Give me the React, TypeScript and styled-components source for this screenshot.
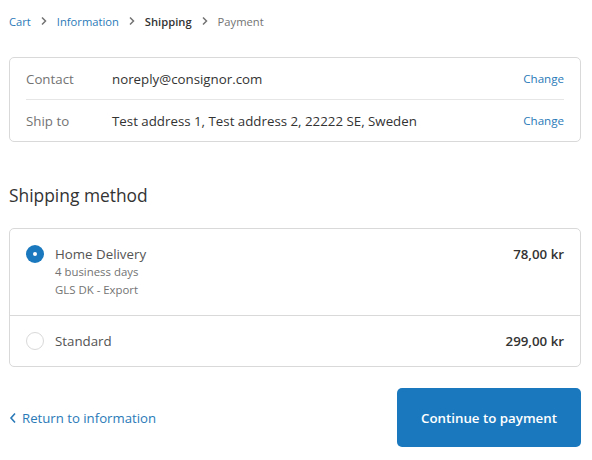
import React from 'react';
import styled, { createGlobalStyle } from 'styled-components';

const GlobalStyle = createGlobalStyle`
  html, body {
    margin: 0;
    padding: 0;
    background: #fff;
  }
  body {
    font-family: "Open Sans", "Noto Sans", sans-serif;
    color: #333;
  }
`;

const Page = styled.div`
  width: 592px;
  box-sizing: border-box;
  padding: 12px 12px 0 9px;
`;

const Breadcrumbs = styled.nav`
  display: flex;
  align-items: center;
  gap: 8px;
  height: 18px;
  font-size: 11.2px;
`;

const Crumb = styled.span<{ $state: 'link' | 'current' | 'next' }>`
  color: ${({ $state }) =>
    $state === 'link' ? '#2a7ab8' : $state === 'current' ? '#333' : '#737373'};
  font-weight: ${({ $state }) => ($state === 'current' ? 600 : 400)};
`;

const Chevron = styled.svg`
  width: 10px;
  height: 10px;
  color: #737373;
`;

const Box = styled.div`
  border: 1px solid #d9d9d9;
  border-radius: 5px;
  box-sizing: border-box;
  width: 572px;
`;

const SummaryBox = styled(Box)`
  margin-top: 27px;
  padding: 0 16px;
`;

const SummaryRow = styled.div`
  display: flex;
  align-items: center;
  height: 41px;
  font-size: 13.3px;

  & + & {
    border-top: 1px solid #e6e6e6;
  }
`;

const SummaryLabel = styled.span`
  width: 86px;
  color: #737373;
`;

const SummaryValue = styled.span`
  flex: 1;
  color: #333;
`;

const ChangeLink = styled.a`
  font-size: 11.6px;
  color: #2a7ab8;
  text-decoration: none;
`;

const SectionTitle = styled.h2`
  margin: 41px 0 0;
  font-size: 17.4px;
  font-weight: 400;
  line-height: 24px;
  color: #333;
`;

const MethodBox = styled(Box)`
  margin-top: 21px;
`;

const MethodRow = styled.label`
  display: flex;
  align-items: flex-start;
  padding: 16px;

  & + & {
    border-top: 1px solid #d9d9d9;
  }
`;

const Radio = styled.span<{ $checked?: boolean }>`
  flex: none;
  width: 18px;
  height: 18px;
  box-sizing: border-box;
  border-radius: 50%;
  margin-right: 11px;
  background: ${({ $checked }) => ($checked ? '#1a79be' : '#fff')};
  border: ${({ $checked }) => ($checked ? 'none' : '1px solid #d9d9d9')};
  display: flex;
  align-items: center;
  justify-content: center;

  &::after {
    content: '';
    width: 4px;
    height: 4px;
    border-radius: 50%;
    background: #fff;
    display: ${({ $checked }) => ($checked ? 'block' : 'none')};
  }
`;

const MethodInfo = styled.div`
  flex: 1;
  display: flex;
  flex-direction: column;
`;

const MethodName = styled.span`
  font-size: 13.3px;
  line-height: 18px;
  color: #545454;
`;

const MethodMeta = styled.span`
  font-size: 11.4px;
  line-height: 18px;
  color: #737373;
`;

const Price = styled.span`
  font-size: 13.3px;
  line-height: 18px;
  font-weight: 600;
  color: #333;
`;

const Footer = styled.div`
  margin-top: 21px;
  width: 572px;
  display: flex;
  align-items: center;
  justify-content: space-between;
`;

const BackLink = styled.a`
  display: flex;
  align-items: center;
  gap: 5px;
  color: #2a7ab8;
  font-size: 13.2px;
  text-decoration: none;
`;

const PrimaryButton = styled.button`
  width: 184px;
  height: 59px;
  border: none;
  border-radius: 5px;
  background: #1a79be;
  color: #fff;
  font-family: inherit;
  font-size: 13.3px;
  font-weight: 600;
  cursor: pointer;
`;

const ChevronRight = () => (
  <Chevron viewBox="0 0 10 10" fill="none">
    <path d="M3 1.5 L6.5 5 L3 8.5" stroke="currentColor" strokeWidth="1.5" />
  </Chevron>
);

export default function App() {
  return (
    <>
      <GlobalStyle />
      <Page>
        <Breadcrumbs>
          <Crumb $state="link">Cart</Crumb>
          <ChevronRight />
          <Crumb $state="link">Information</Crumb>
          <ChevronRight />
          <Crumb $state="current">Shipping</Crumb>
          <ChevronRight />
          <Crumb $state="next">Payment</Crumb>
        </Breadcrumbs>

        <SummaryBox>
          <SummaryRow>
            <SummaryLabel>Contact</SummaryLabel>
            <SummaryValue>noreply@consignor.com</SummaryValue>
            <ChangeLink href="#">Change</ChangeLink>
          </SummaryRow>
          <SummaryRow>
            <SummaryLabel>Ship to</SummaryLabel>
            <SummaryValue>Test address 1, Test address 2, 22222 SE, Sweden</SummaryValue>
            <ChangeLink href="#">Change</ChangeLink>
          </SummaryRow>
        </SummaryBox>

        <SectionTitle>Shipping method</SectionTitle>

        <MethodBox>
          <MethodRow>
            <Radio $checked />
            <MethodInfo>
              <MethodName>Home Delivery</MethodName>
              <MethodMeta>4 business days</MethodMeta>
              <MethodMeta>GLS DK - Export</MethodMeta>
            </MethodInfo>
            <Price>78,00 kr</Price>
          </MethodRow>
          <MethodRow>
            <Radio />
            <MethodInfo>
              <MethodName>Standard</MethodName>
            </MethodInfo>
            <Price>299,00 kr</Price>
          </MethodRow>
        </MethodBox>

        <Footer>
          <BackLink href="#">
            <svg width="8" height="12" viewBox="0 0 8 12" fill="none">
              <path d="M6 1.5 L2 6 L6 10.5" stroke="currentColor" strokeWidth="1.6" />
            </svg>
            Return to information
          </BackLink>
          <PrimaryButton>Continue to payment</PrimaryButton>
        </Footer>
      </Page>
    </>
  );
}
